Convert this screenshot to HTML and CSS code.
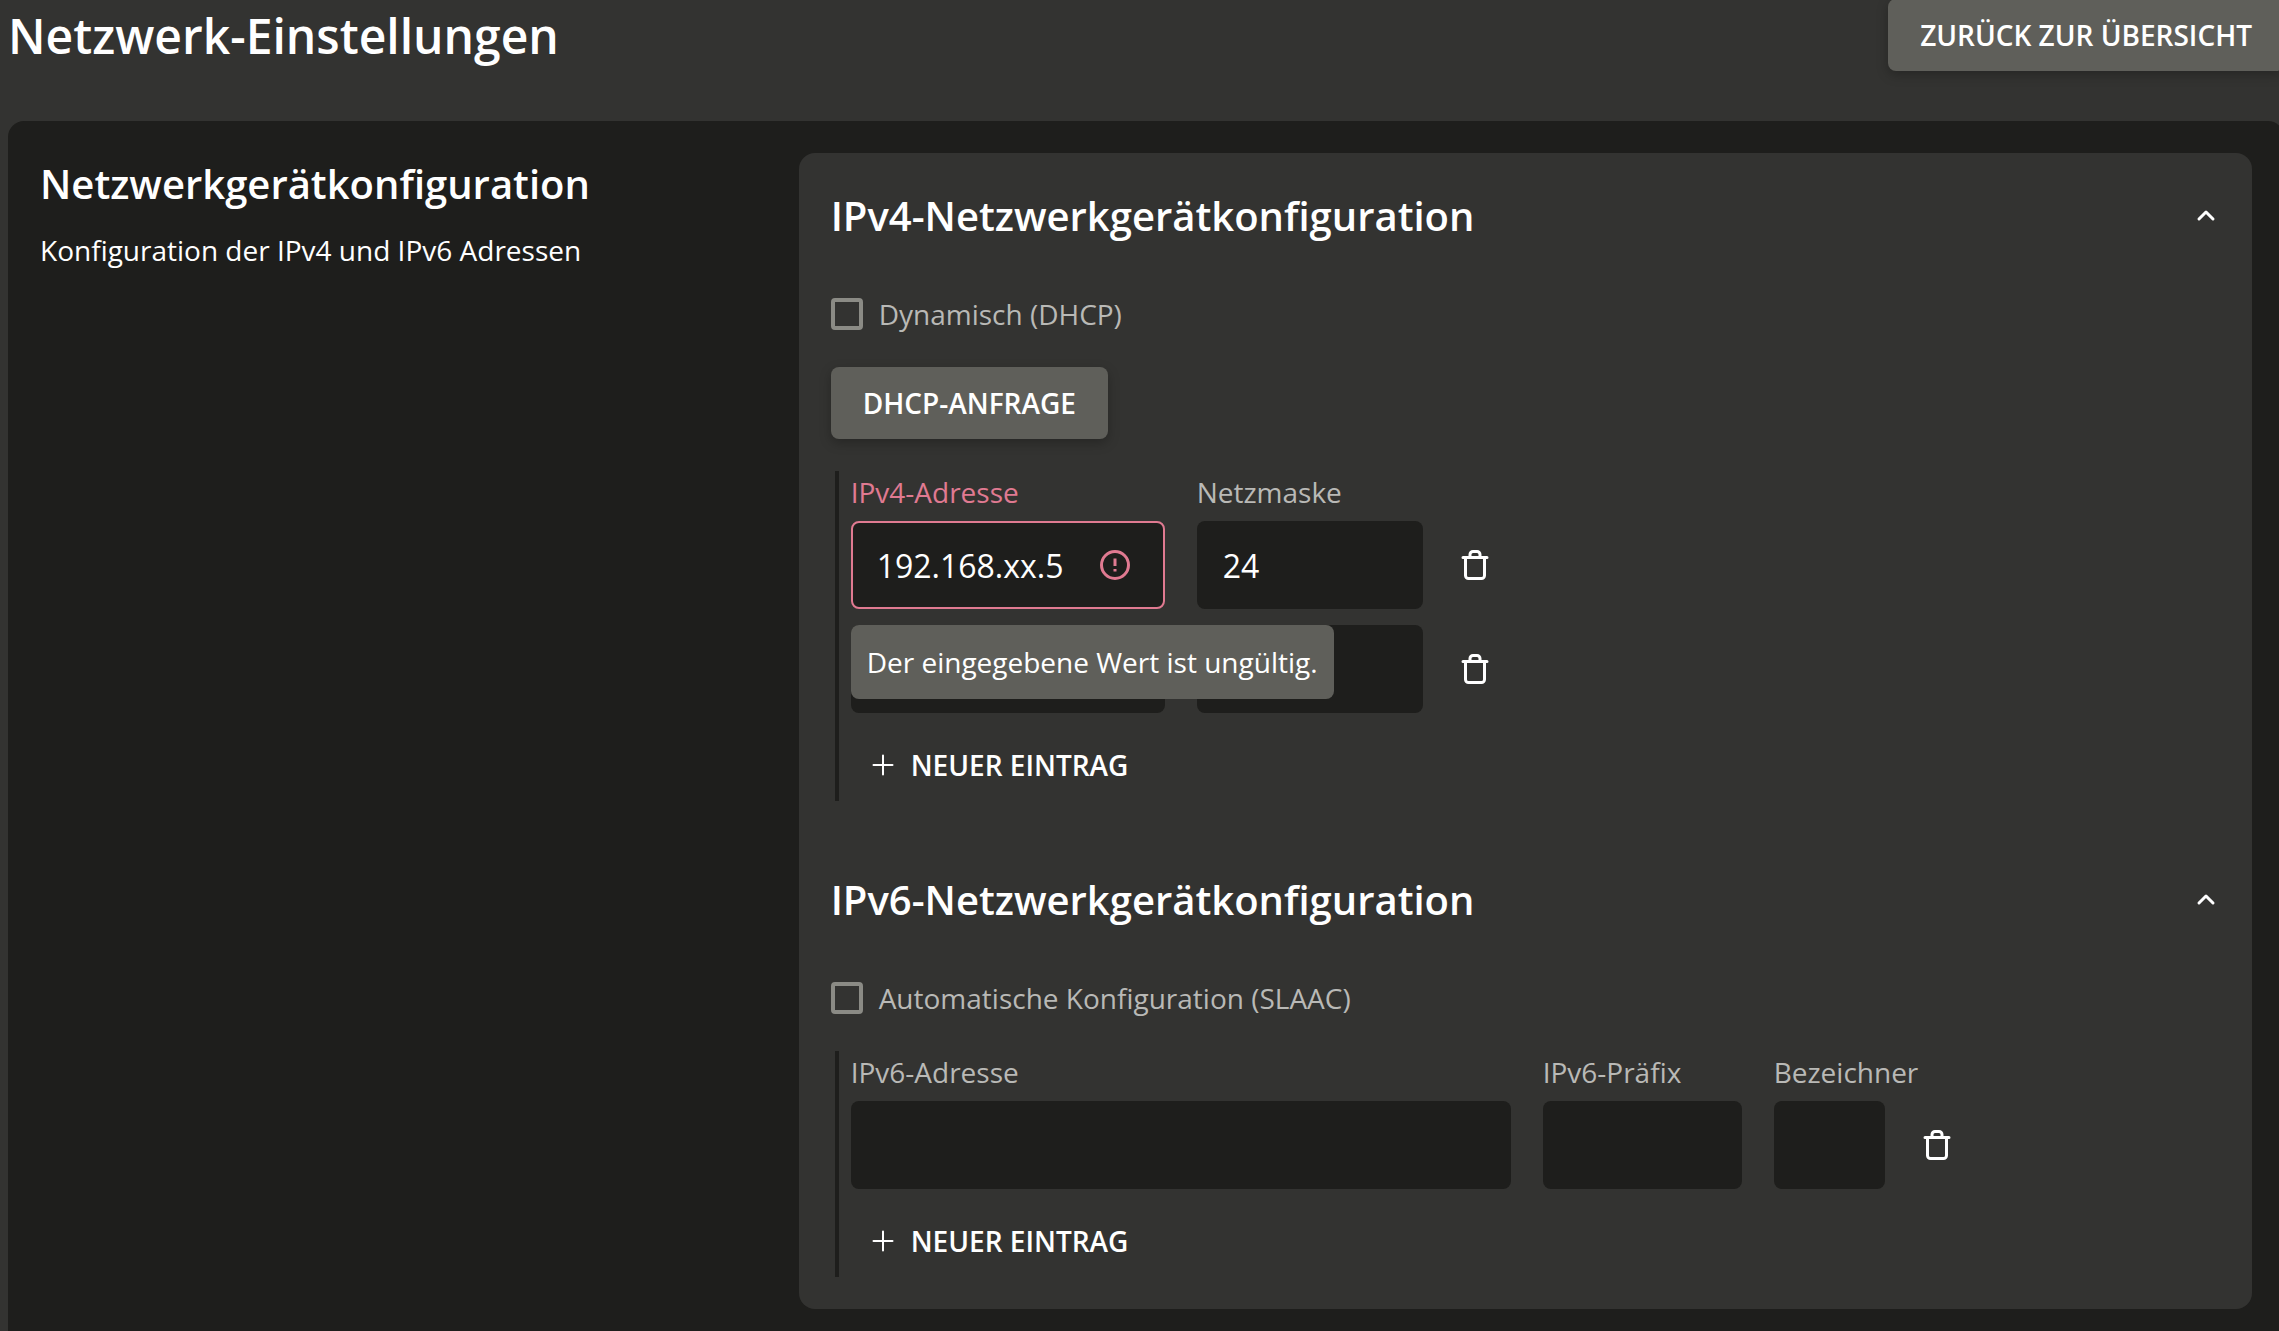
FILE: index.html
```html
<!DOCTYPE html>
<html lang="de">
<head>
<meta charset="utf-8">
<meta name="viewport" content="width=device-width, initial-scale=1">
<title>Netzwerk-Einstellungen</title>
<link rel="stylesheet" href="styles.css">
</head>
<body>
<svg class="sprite" aria-hidden="true">
  <symbol id="icon-trash" viewBox="0 0 32 32">
    <path d="M4 8.500h24M6.500 8.500v18a3 3 0 0 0 3 3h13a3 3 0 0 0 3-3v-18M11 8.500v-3a3 3 0 0 1 3-3h4a3 3 0 0 1 3 3v3"/>
  </symbol>
  <symbol id="icon-plus" viewBox="0 0 32 32"><path stroke-width="2" d="M16 6.500v19M6.500 16h19"/></symbol>
  <symbol id="icon-up" viewBox="0 0 28 28"><path d="M7 17l7-7 7 7"/></symbol>
  <symbol id="icon-error" viewBox="0 0 32 32"><circle cx="16" cy="16" r="13.500"/><path stroke-linecap="butt" d="M16 9.500v7.500M16 20v2.500"/></symbol>
</svg>
<div class="page">
  <header class="page-header">
    <h1 class="page-title">Netzwerk-Einstellungen</h1>
    <button class="button" type="button">ZURÜCK ZUR ÜBERSICHT</button>
  </header>
  <main class="section">
    <div class="intro">
      <h2 class="heading">Netzwerkgerätkonfiguration</h2>
      <p class="description">Konfiguration der IPv4 und IPv6 Adressen</p>
    </div>
    <form class="card">
      <section class="panel">
        <div class="panel-header">
          <h2 class="heading">IPv4-Netzwerkgerätkonfiguration</h2>
          <button class="toggle" type="button" aria-label="IPv4 einklappen" aria-expanded="true"><svg class="icon-small"><use href="#icon-up"/></svg></button>
        </div>
        <div class="panel-body">
          <label class="check"><input class="checkbox" type="checkbox">Dynamisch (DHCP)</label>
          <div class="stack">
            <button class="button" type="button">DHCP-ANFRAGE</button>
            <div class="entries">
              <div class="row labels">
                <label class="label address invalid" for="v4-address">IPv4-Adresse</label>
                <label class="label mask" for="v4-mask">Netzmaske</label>
              </div>
              <div class="rows">
                <div class="row">
                  <div class="field address">
                    <input class="input input-invalid" id="v4-address" type="text" value="192.168.xx.5" aria-invalid="true" aria-describedby="v4-error">
                    <svg class="icon error-icon" aria-hidden="true"><use href="#icon-error"/></svg>
                    <span class="tooltip" id="v4-error" role="tooltip">Der eingegebene Wert ist ungültig.</span>
                  </div>
                  <div class="field mask"><input class="input" id="v4-mask" type="text" value="24"></div>
                  <button class="icon-button" type="button" aria-label="Eintrag löschen"><svg class="icon"><use href="#icon-trash"/></svg></button>
                </div>
                <div class="row">
                  <div class="field address"><input class="input" type="text" aria-label="IPv4-Adresse 2"></div>
                  <div class="field mask"><input class="input" type="text" aria-label="Netzmaske 2"></div>
                  <button class="icon-button" type="button" aria-label="Eintrag löschen"><svg class="icon"><use href="#icon-trash"/></svg></button>
                </div>
                <button class="add" type="button"><svg class="icon"><use href="#icon-plus"/></svg>NEUER EINTRAG</button>
              </div>
            </div>
          </div>
        </div>
      </section>
      <section class="panel">
        <div class="panel-header">
          <h2 class="heading">IPv6-Netzwerkgerätkonfiguration</h2>
          <button class="toggle" type="button" aria-label="IPv6 einklappen" aria-expanded="true"><svg class="icon-small"><use href="#icon-up"/></svg></button>
        </div>
        <div class="panel-body">
          <label class="check"><input class="checkbox" type="checkbox">Automatische Konfiguration (SLAAC)</label>
          <div class="entries">
            <div class="row labels">
              <label class="label address-long" for="v6-address">IPv6-Adresse</label>
              <label class="label prefix" for="v6-prefix">IPv6-Präfix</label>
              <label class="label identifier" for="v6-id">Bezeichner</label>
            </div>
            <div class="rows">
              <div class="row">
                <div class="field address-long"><input class="input" id="v6-address" type="text"></div>
                <div class="field prefix"><input class="input" id="v6-prefix" type="text"></div>
                <div class="field identifier"><input class="input" id="v6-id" type="text"></div>
                <button class="icon-button" type="button" aria-label="Eintrag löschen"><svg class="icon"><use href="#icon-trash"/></svg></button>
              </div>
              <button class="add" type="button"><svg class="icon"><use href="#icon-plus"/></svg>NEUER EINTRAG</button>
            </div>
          </div>
        </div>
      </section>
    </form>
  </main>
</div>
</body>
</html>
```

FILE: styles.css
```css
:root {
  --surface: #333331;
  --sunken: #1e1e1c;
  --raised: #5f5f5a;
  --muted: #b9b9b6;
  --outline: #8b8b85;
  --error: #e07a91;
}

* { box-sizing: border-box; }

html { overflow: hidden; }

body {
  margin: 0;
  background: var(--surface);
  color: #fff;
  font: 400 28px/38px "Open Sans", "Noto Sans", sans-serif;
}

h1, h2, p { margin: 0; }

button, input { font: inherit; color: inherit; }

button { border: 0; padding: 0; background: none; cursor: pointer; }

svg { display: block; fill: none; stroke: currentColor; stroke-width: 3; stroke-linecap: round; stroke-linejoin: round; }

.sprite { display: none; }

/* The content area runs slightly past the right window edge. */
.page {
  display: flex;
  flex-direction: column;
  gap: 50px;
  min-height: calc(100vh + 1px);
  margin: -1px -5px 0 8px;
}

.page-header { display: flex; justify-content: space-between; align-items: flex-end; }

.page-title { font-size: 48px; line-height: 70px; font-weight: 600; }

.button {
  align-self: flex-start;
  height: 72px;
  padding: 0 32px;
  border-radius: 8px;
  background: var(--raised);
  font-weight: 600;
  box-shadow: 0 4px 12px rgba(0, 0, 0, 0.25);
}

.section {
  flex: 1;
  display: grid;
  grid-template-columns: 1fr 2fr;
  align-items: start;
  gap: 32px;
  padding: 32px 32px 22px;
  border-radius: 16px 16px 0 0;
  background: var(--sunken);
}

.heading { font-size: 40px; line-height: 62px; font-weight: 600; }

.description { margin-top: 16px; }

.card {
  display: flex;
  flex-direction: column;
  gap: 68px;
  padding: 32px;
  border-radius: 16px;
  background: var(--surface);
}

.panel-header { display: flex; justify-content: space-between; align-items: center; margin-bottom: 48px; }

.toggle { width: 28px; height: 28px; }

.icon-small { width: 28px; height: 28px; }

.panel-body { display: flex; flex-direction: column; gap: 34px; }

.stack { display: flex; flex-direction: column; gap: 32px; }

.check { display: flex; align-items: center; gap: 16px; color: var(--muted); }

.checkbox {
  appearance: none;
  width: 32px;
  height: 32px;
  margin: 0;
  border: 4px solid var(--outline);
  border-radius: 4px;
}

.entries { margin-left: 4px; padding-left: 12px; border-left: 4px solid var(--sunken); }

.row { display: flex; align-items: center; gap: 32px; }

.rows { display: flex; flex-direction: column; align-items: flex-start; gap: 16px; }

.labels { padding-bottom: 8px; }

.label { color: var(--muted); line-height: 42px; white-space: nowrap; }

.invalid { color: var(--error); }

.address { width: 314px; }
.mask { width: 226px; }
.address-long { width: 660px; }
.prefix { width: 199px; }
.identifier { width: 111px; }

.field { position: relative; }

.input {
  display: block;
  width: 100%;
  height: 88px;
  padding: 0 24px;
  border: 2px solid transparent;
  border-radius: 8px;
  outline: 0;
  background: var(--sunken);
  font-size: 32px;
}

.input-invalid { border-color: var(--error); padding-right: 72px; }

.error-icon { position: absolute; top: 28px; right: 34px; color: var(--error); }

.tooltip {
  position: absolute;
  z-index: 1;
  top: 104px;
  left: 0;
  padding: 18px 16px;
  border-radius: 8px;
  background: var(--raised);
  white-space: nowrap;
}

.icon { width: 32px; height: 32px; }

.icon-button { display: grid; place-items: center; width: 40px; height: 72px; }

.add { display: flex; align-items: center; gap: 12px; height: 72px; padding: 0 16px; font-weight: 600; }
```
